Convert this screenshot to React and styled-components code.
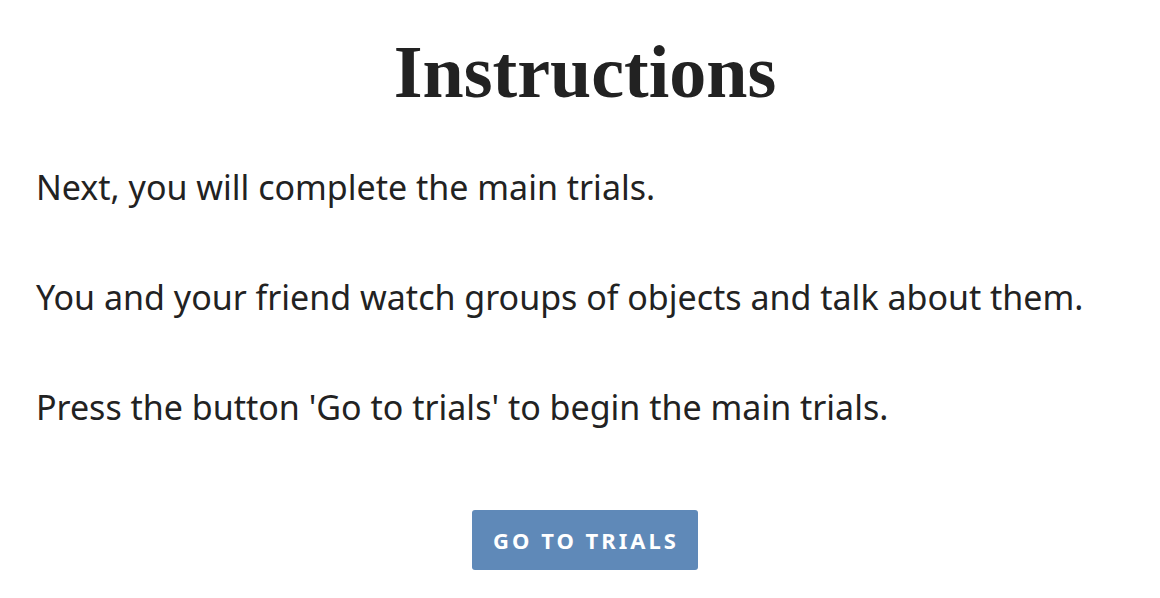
import React from 'react';
import styled, { createGlobalStyle } from 'styled-components';

const GlobalStyle = createGlobalStyle`
  html, body {
    margin: 0;
    padding: 0;
    background: #ffffff;
  }
  body {
    font-family: 'Noto Sans', 'Open Sans', sans-serif;
    color: #222222;
  }
`;

const Page = styled.div`
  padding: 0 26px 0 36px;
  display: flex;
  flex-direction: column;
`;

const Title = styled.h1`
  font-family: 'Liberation Serif', 'DejaVu Serif', serif;
  font-weight: 700;
  font-size: 74px;
  line-height: 1;
  text-align: center;
  color: #222222;
  margin: 35px 0 56px;
`;

const Paragraph = styled.p`
  font-size: 34px;
  line-height: 44px;
  margin: 0 0 ${props => props.gap || 66}px;
`;

const Actions = styled.div`
  display: flex;
  justify-content: center;
  margin-top: 8px;
`;

const Button = styled.button`
  font-family: 'Noto Sans', 'Open Sans', sans-serif;
  background: #5f89b8;
  color: #ffffff;
  border: none;
  border-radius: 3px;
  height: 60px;
  padding: 0 19px 0 21px;
  font-size: 22px;
  font-weight: 700;
  letter-spacing: 3px;
  text-transform: uppercase;
  cursor: pointer;
`;

const App = () => (
  <>
    <GlobalStyle />
    <Page>
      <Title>Instructions</Title>
      <Paragraph>Next, you will complete the main trials.</Paragraph>
      <Paragraph>You and your friend watch groups of objects and talk about them.</Paragraph>
      <Paragraph gap={73}>Press the button 'Go to trials' to begin the main trials.</Paragraph>
      <Actions>
        <Button>Go to trials</Button>
      </Actions>
    </Page>
  </>
);

export default App;
